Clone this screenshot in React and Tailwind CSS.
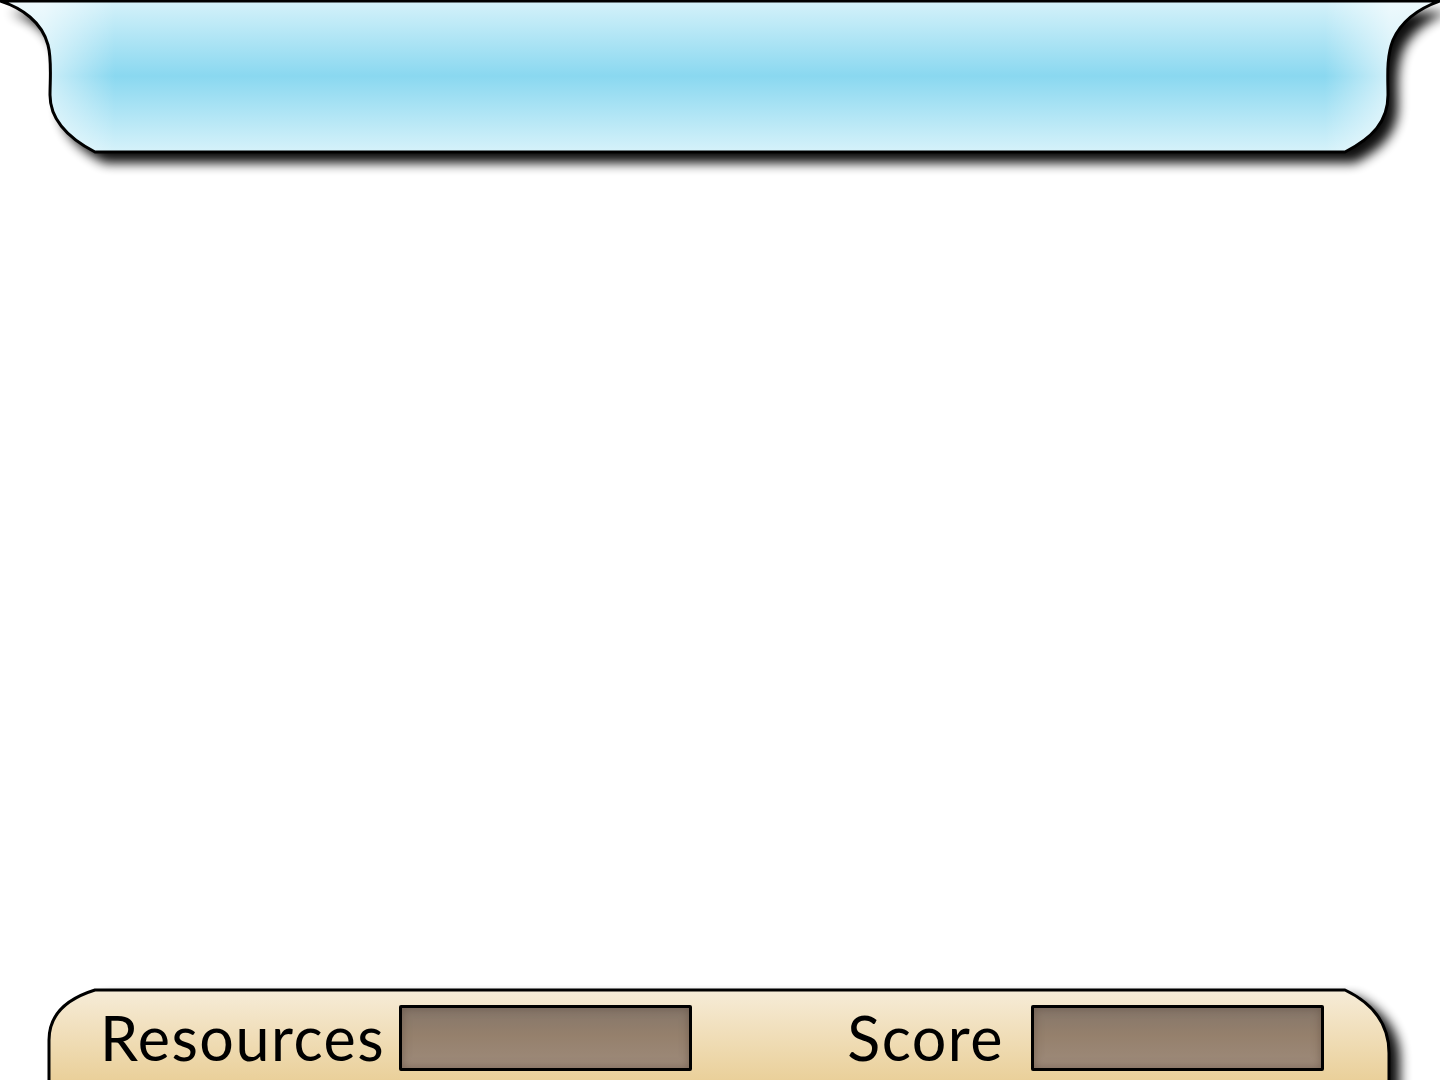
import React from 'react'

// Sky-blue banner shape across the top of the board
function TopBanner() {
  const d =
    'M0,1 C22,8 42,22 48,45 C52,60 50,80 50,95 C50,120 68,138 95,152 L1345,152 C1372,138 1388,122 1388,95 C1388,78 1386,58 1393,40 C1402,20 1420,8 1440,1 Z'
  return (
    <svg className="absolute inset-0 w-full h-full" viewBox="0 0 1440 180" preserveAspectRatio="none">
      <defs>
        <linearGradient id="skyV" x1="0" y1="0" x2="0" y2="152" gradientUnits="userSpaceOnUse">
          <stop offset="0" stopColor="#d6f2fa" />
          <stop offset="0.5" stopColor="#8ad8f0" />
          <stop offset="1" stopColor="#d6f2fa" />
        </linearGradient>
        <linearGradient id="skyH" x1="0" y1="0" x2="1440" y2="0" gradientUnits="userSpaceOnUse">
          <stop offset="0.03" stopColor="#ffffff" stopOpacity="0.6" />
          <stop offset="0.08" stopColor="#ffffff" stopOpacity="0" />
          <stop offset="0.92" stopColor="#ffffff" stopOpacity="0" />
          <stop offset="0.965" stopColor="#ffffff" stopOpacity="0.6" />
        </linearGradient>
        <filter id="topShadow" x="-5%" y="-20%" width="115%" height="160%">
          <feGaussianBlur in="SourceAlpha" stdDeviation="6" />
          <feOffset dx="10" dy="11" />
          <feComponentTransfer>
            <feFuncA type="linear" slope="0.95" />
          </feComponentTransfer>
          <feMerge>
            <feMergeNode />
            <feMergeNode in="SourceGraphic" />
          </feMerge>
        </filter>
      </defs>
      <g filter="url(#topShadow)">
        <path d={d} fill="url(#skyV)" />
      </g>
      <path d={d} fill="url(#skyH)" stroke="#000" strokeWidth="3" strokeLinejoin="round" />
    </svg>
  )
}

// Parchment-coloured panel along the bottom edge
function BottomPanel() {
  const d = 'M49,110 L49,55 C49,30 66,14 95,5 L1345,5 C1372,18 1389,38 1389,68 L1389,110 Z'
  return (
    <svg className="absolute inset-0 w-full h-full" viewBox="0 0 1440 95" preserveAspectRatio="none">
      <defs>
        <linearGradient id="sandV" x1="0" y1="5" x2="0" y2="95" gradientUnits="userSpaceOnUse">
          <stop offset="0" stopColor="#f6ecd8" />
          <stop offset="0.35" stopColor="#f2e2c2" />
          <stop offset="1" stopColor="#ead09a" />
        </linearGradient>
        <filter id="botShadow" x="-5%" y="-30%" width="115%" height="180%">
          <feGaussianBlur in="SourceAlpha" stdDeviation="6" />
          <feOffset dx="11" dy="7" />
          <feComponentTransfer>
            <feFuncA type="linear" slope="0.95" />
          </feComponentTransfer>
          <feMerge>
            <feMergeNode />
            <feMergeNode in="SourceGraphic" />
          </feMerge>
        </filter>
      </defs>
      <g filter="url(#botShadow)">
        <path d={d} fill="url(#sandV)" />
      </g>
      <path d={d} fill="none" stroke="#000" strokeWidth="3" strokeLinejoin="round" />
    </svg>
  )
}

function ValueBox() {
  return (
    <div className="w-[293px] h-[66px] rounded-[2px] border-[3px] border-black bg-[linear-gradient(to_bottom,#85766a_0%,#95806c_45%,#9e8b7b_100%)] shadow-[inset_0_0_10px_rgba(90,70,55,0.55)]" />
  )
}

export default function App() {
  return (
    <div className="w-[1440px] h-[1080px] bg-white overflow-hidden flex flex-col font-['Lato','Liberation_Sans',sans-serif]">
      <header className="relative h-[180px] shrink-0">
        <TopBanner />
      </header>

      <main className="flex-1" />

      <footer className="relative h-[95px] shrink-0">
        <BottomPanel />
        <div className="relative flex items-start pt-[20px] pl-[100px] pr-[116px]">
          <div className="flex items-center">
            <span className="text-[61px] leading-[66px] text-black tracking-[1.5px]">Resources</span>
            <div className="ml-[14px]">
              <ValueBox />
            </div>
          </div>
          <div className="ml-auto flex items-center gap-[27px]">
            <span className="text-[61px] leading-[66px] text-black tracking-[1.5px]">Score</span>
            <ValueBox />
          </div>
        </div>
      </footer>
    </div>
  )
}
